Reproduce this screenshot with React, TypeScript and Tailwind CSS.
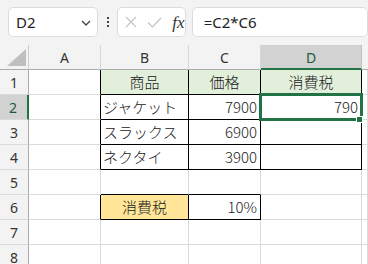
import React from 'react';

const FONT = { fontFamily: '"Noto Sans CJK JP", "Noto Sans", sans-serif' };

type C = {
  t?: string;
  al?: 'l' | 'c' | 'r';
  bg?: string;
  rb?: boolean;
  bb?: boolean;
};

const widths = ['w-[72px]', 'w-[88px]', 'w-[72px]', 'w-[101px]', 'flex-1'];

function Cell({ c, w }: { c: C; w: string }) {
  const al = c.al === 'c' ? 'justify-center' : c.al === 'r' ? 'justify-end pr-[3px]' : 'justify-start pl-[2px]';
  return (
    <div
      className={`box-border h-[25px] shrink-0 border-r border-b flex items-center pt-[1px] text-[15px] font-light text-[#1a1a1a] ${w} ${al} ${
        c.rb ? 'border-r-black' : 'border-r-[#dadada]'
      } ${c.bb ? 'border-b-black' : 'border-b-[#dadada]'} ${c.bg ?? 'bg-white'}`}
    >
      {c.t}
    </div>
  );
}

const rows: { n: number; sel?: boolean; cells: C[] }[] = [
  {
    n: 1,
    cells: [
      { rb: true },
      { t: '商品', al: 'c', bg: 'bg-[#e2efda]', rb: true, bb: true },
      { t: '価格', al: 'c', bg: 'bg-[#e2efda]', rb: true, bb: true },
      { t: '消費税', al: 'c', bg: 'bg-[#e2efda]', rb: true, bb: true },
      {},
    ],
  },
  {
    n: 2,
    sel: true,
    cells: [
      { rb: true },
      { t: 'ジャケット', rb: true, bb: true },
      { t: '7900', al: 'r', rb: true, bb: true },
      { t: '790', al: 'r', rb: true, bb: true },
      {},
    ],
  },
  {
    n: 3,
    cells: [
      { rb: true },
      { t: 'スラックス', rb: true, bb: true },
      { t: '6900', al: 'r', rb: true, bb: true },
      { rb: true, bb: true },
      {},
    ],
  },
  {
    n: 4,
    cells: [
      { rb: true },
      { t: 'ネクタイ', rb: true, bb: true },
      { t: '3900', al: 'r', rb: true, bb: true },
      { rb: true, bb: true },
      {},
    ],
  },
  { n: 5, cells: [{}, { bb: true }, { bb: true }, {}, {}] },
  {
    n: 6,
    cells: [
      { rb: true },
      { t: '消費税', al: 'c', bg: 'bg-[#ffe699]', rb: true, bb: true },
      { t: '10%', al: 'r', rb: true, bb: true },
      {},
      {},
    ],
  },
  { n: 7, cells: [{}, {}, {}, {}, {}] },
  { n: 8, cells: [{}, {}, {}, {}, {}] },
];

export default function App() {
  return (
    <div className="relative w-[368px] h-[264px] overflow-hidden bg-white" style={FONT}>
      {/* toolbar */}
      <div className="h-[45px] bg-[#f3f3f3] flex items-start pt-[7px] pl-[8px]">
        <div className="box-border w-[101px] h-[30px] bg-white border border-[#dcdcdc] rounded-[5px] flex items-center pl-[7px] pr-[6px] justify-between">
          <span className="text-[15px] text-[#222]" style={{ fontFamily: '"Noto Sans", sans-serif' }}>D2</span>
          <svg width="10" height="6" viewBox="0 0 10 6" className="mt-[2px]">
            <path d="M1 1 L5 5 L9 1" fill="none" stroke="#444" strokeWidth="1.3" />
          </svg>
        </div>
        <div className="w-[22px] h-[30px] flex flex-col items-center justify-center gap-[2px]">
          <div className="w-[2px] h-[2px] bg-[#444]" />
          <div className="w-[2px] h-[2px] bg-[#444]" />
          <div className="w-[2px] h-[2px] bg-[#444]" />
        </div>
        <div className="box-border w-[72px] h-[30px] bg-white border border-[#dcdcdc] rounded-[5px] flex items-center pl-[7px]">
          <svg width="12" height="12" viewBox="0 0 12 12">
            <path d="M1 1 L11 11 M11 1 L1 11" stroke="#c4c4c4" strokeWidth="1.2" fill="none" />
          </svg>
          <svg width="15" height="11" viewBox="0 0 15 11" className="ml-[10px]">
            <path d="M1 5.5 L5.5 10 L14 1" stroke="#c4c4c4" strokeWidth="1.2" fill="none" />
          </svg>
          <span
            className="ml-[10px] text-[17px] italic text-[#333] leading-none"
            style={{ fontFamily: '"Liberation Serif", serif' }}
          >
            fx
          </span>
        </div>
        <div className="box-border ml-[6px] w-[200px] h-[30px] bg-white border border-[#dcdcdc] rounded-[5px] flex items-center pl-[11px]">
          <span className="text-[15px] text-[#222]" style={{ fontFamily: '"Noto Sans", sans-serif' }}>=C2*C6</span>
        </div>
      </div>

      {/* column headers */}
      <div className="flex h-[25px]" style={{ fontFamily: '"Noto Sans", sans-serif' }}>
        <div className="box-border w-[29px] h-[25px] shrink-0 bg-[#f3f3f3] border-r border-b border-r-[#cfcfcf] border-b-[#ababab] relative">
          <svg width="19" height="17" viewBox="0 0 19 17" className="absolute left-[7px] top-[4px]">
            <polygon points="19,0 19,17 0,17" fill="#bfbfbf" />
          </svg>
        </div>
        {['A', 'B', 'C'].map((l, i) => (
          <div
            key={l}
            className={`box-border h-[25px] shrink-0 bg-[#f3f3f3] border-r border-b border-r-[#d6d6d6] border-b-[#ababab] flex items-center justify-center text-[14px] text-[#333] ${widths[i]}`}
          >
            {l}
          </div>
        ))}
        <div className="box-border w-[101px] h-[25px] shrink-0 bg-[#d2d2d2] border-r border-r-[#c0c0c0] border-b-2 border-b-[#217346] flex items-center justify-center text-[14px] text-[#1d5c3a] pt-[1px]">
          D
        </div>
        <div className="flex-1 h-[25px] bg-[#f3f3f3] border-b border-b-[#ababab]" />
      </div>

      {/* rows */}
      {rows.map((r) => (
        <div key={r.n} className="flex">
          <div
            className={`box-border w-[29px] h-[25px] shrink-0 border-b border-b-[#dadada] flex items-center justify-center text-[14px] ${
              r.sel
                ? 'bg-[#d2d2d2] border-r-2 border-r-[#217346] text-[#1d5c3a] pr-[1px]'
                : 'bg-[#f3f3f3] border-r border-r-[#ababab] text-[#333]'
            }`}
            style={{ fontFamily: '"Noto Sans", sans-serif' }}
          >
            {r.n}
          </div>
          {r.cells.map((c, i) => (
            <Cell key={i} c={c} w={widths[i]} />
          ))}
        </div>
      ))}

      {/* selection */}
      <div className="absolute left-[259px] top-[93px] w-[104px] h-[28px] border-[3px] border-[#217346] pointer-events-none" />
      <div className="absolute left-[356px] top-[116px] w-[7px] h-[7px] bg-[#217346] border border-white" />
    </div>
  );
}
